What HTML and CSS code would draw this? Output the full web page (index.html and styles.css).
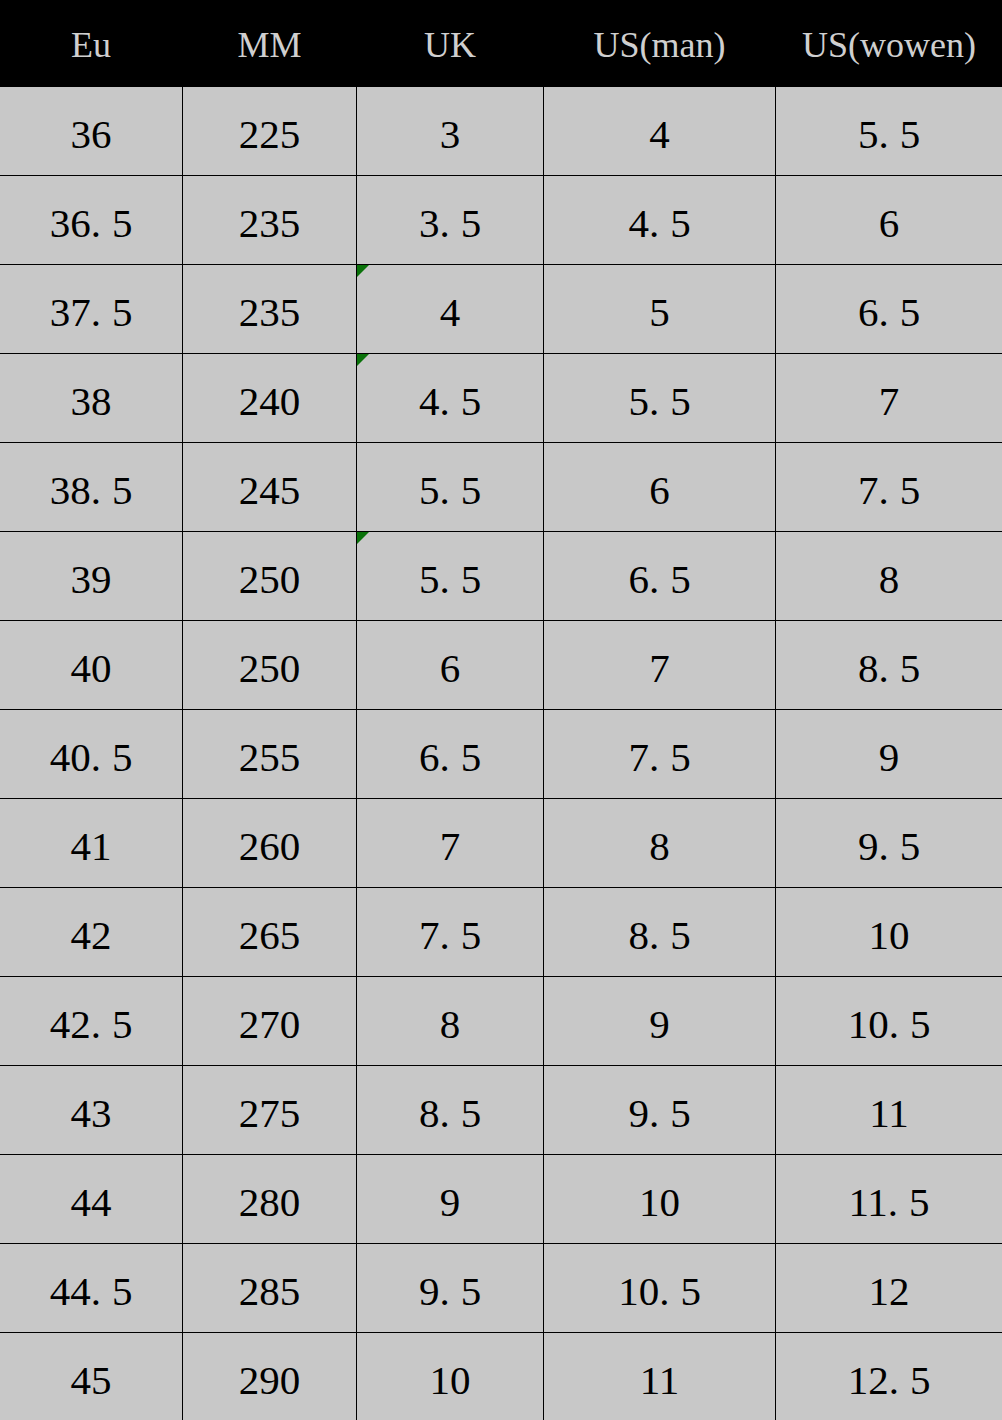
FILE: index.html
```html
<!DOCTYPE html>
<html>
<head>
<meta charset="utf-8">
<link rel="stylesheet" href="styles.css">
</head>
<body>
<div class="chart">
  <div class="hd">Eu</div><div class="hd">MM</div><div class="hd">UK</div><div class="hd">US(man)</div><div class="hd">US(wowen)</div>

  <div class="c">36</div><div class="c">225</div><div class="c">3</div><div class="c">4</div><div class="c">5<span class="dot">.</span>5</div>
  <div class="c">36<span class="dot">.</span>5</div><div class="c">235</div><div class="c">3<span class="dot">.</span>5</div><div class="c">4<span class="dot">.</span>5</div><div class="c">6</div>
  <div class="c">37<span class="dot">.</span>5</div><div class="c">235</div><div class="c flag">4</div><div class="c">5</div><div class="c">6<span class="dot">.</span>5</div>
  <div class="c">38</div><div class="c">240</div><div class="c flag">4<span class="dot">.</span>5</div><div class="c">5<span class="dot">.</span>5</div><div class="c">7</div>
  <div class="c">38<span class="dot">.</span>5</div><div class="c">245</div><div class="c">5<span class="dot">.</span>5</div><div class="c">6</div><div class="c">7<span class="dot">.</span>5</div>
  <div class="c">39</div><div class="c">250</div><div class="c flag">5<span class="dot">.</span>5</div><div class="c">6<span class="dot">.</span>5</div><div class="c">8</div>
  <div class="c">40</div><div class="c">250</div><div class="c">6</div><div class="c">7</div><div class="c">8<span class="dot">.</span>5</div>
  <div class="c">40<span class="dot">.</span>5</div><div class="c">255</div><div class="c">6<span class="dot">.</span>5</div><div class="c">7<span class="dot">.</span>5</div><div class="c">9</div>
  <div class="c">41</div><div class="c">260</div><div class="c">7</div><div class="c">8</div><div class="c">9<span class="dot">.</span>5</div>
  <div class="c">42</div><div class="c">265</div><div class="c">7<span class="dot">.</span>5</div><div class="c">8<span class="dot">.</span>5</div><div class="c">10</div>
  <div class="c">42<span class="dot">.</span>5</div><div class="c">270</div><div class="c">8</div><div class="c">9</div><div class="c">10<span class="dot">.</span>5</div>
  <div class="c">43</div><div class="c">275</div><div class="c">8<span class="dot">.</span>5</div><div class="c">9<span class="dot">.</span>5</div><div class="c">11</div>
  <div class="c">44</div><div class="c">280</div><div class="c">9</div><div class="c">10</div><div class="c">11<span class="dot">.</span>5</div>
  <div class="c">44<span class="dot">.</span>5</div><div class="c">285</div><div class="c">9<span class="dot">.</span>5</div><div class="c">10<span class="dot">.</span>5</div><div class="c">12</div>
  <div class="c">45</div><div class="c">290</div><div class="c">10</div><div class="c">11</div><div class="c">12<span class="dot">.</span>5</div>
</div>
</body>
</html>
```
FILE: styles.css
```css
html, body {
  margin: 0;
  padding: 0;
  background: #c8c8c8;
}
.chart {
  width: 1002px;
  display: grid;
  grid-template-columns: 182px 173px 186px 231px 226px;
  grid-template-rows: 86px;
  grid-auto-rows: 88px;
  column-gap: 1px;
  row-gap: 1px;
  background: #000;
  font-family: "Liberation Serif", "Times New Roman", serif;
}
.hd {
  background: #000;
  color: #cfcfcf;
  font-size: 36px;
  display: flex;
  align-items: center;
  justify-content: center;
  padding-top: 4px;
  box-sizing: border-box;
}
.c {
  background: #c8c8c8;
  color: #000;
  font-size: 41px;
  display: flex;
  align-items: center;
  justify-content: center;
  padding-top: 6px;
  box-sizing: border-box;
  position: relative;
}
.dot {
  margin-right: 11px;
}
.flag::before {
  content: "";
  position: absolute;
  left: 0;
  top: 0;
  width: 0;
  height: 0;
  border-top: 12px solid #0a720a;
  border-right: 12px solid transparent;
}
```
